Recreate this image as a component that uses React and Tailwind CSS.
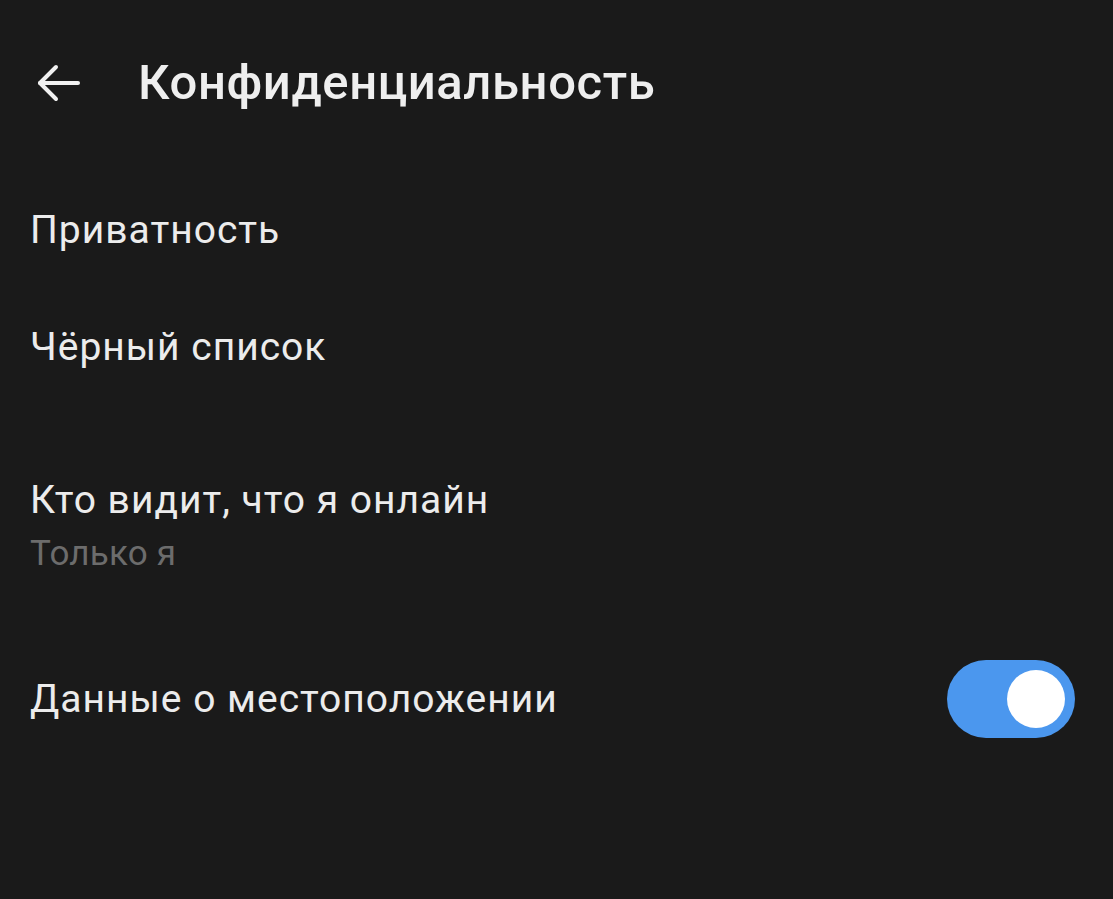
export default function App() {
  return (
    <div className="min-h-[899px] w-full bg-[#1a1a1a] text-[#ececec]" style={{ fontFamily: 'Roboto, "Noto Sans", sans-serif' }}>
      <header className="flex h-[168px] items-start pt-[55px] pl-[34px]">
        <svg width="50" height="50" viewBox="0 0 50 50" className="mt-[3px]" fill="none" stroke="#f0f0f0" strokeWidth="4" strokeLinecap="round" strokeLinejoin="round">
          <path d="M44 25H6" />
          <path d="M22 9L6 25l16 16" />
        </svg>
        <h1 className="ml-[54px] text-[49px] font-medium leading-[56px] tracking-[0.6px] text-[#eeeeee]">Конфиденциальность</h1>
      </header>
      <div className="pl-[30px] text-[39px] leading-[46px] tracking-[1px]">
        <div className="pt-[39px]">Приватность</div>
        <div className="pt-[71px]">Чёрный список</div>
        <div className="pt-[107px]">Кто видит, что я онлайн</div>
        <div className="mt-[13px] text-[35px] leading-[36px] tracking-[0.2px] text-[#6c6c6c]">Только я</div>
      </div>
      <div className="mt-[88px] flex items-center justify-between pl-[30px] pr-[38px]">
        <span className="text-[39px] leading-[46px] tracking-[1px]">Данные о местоположении</span>
        <div className="flex h-[78px] w-[128px] items-center justify-end rounded-full bg-[#4b97ee] pr-[10px]">
          <div className="h-[58px] w-[58px] rounded-full bg-white" />
        </div>
      </div>
    </div>
  );
}
